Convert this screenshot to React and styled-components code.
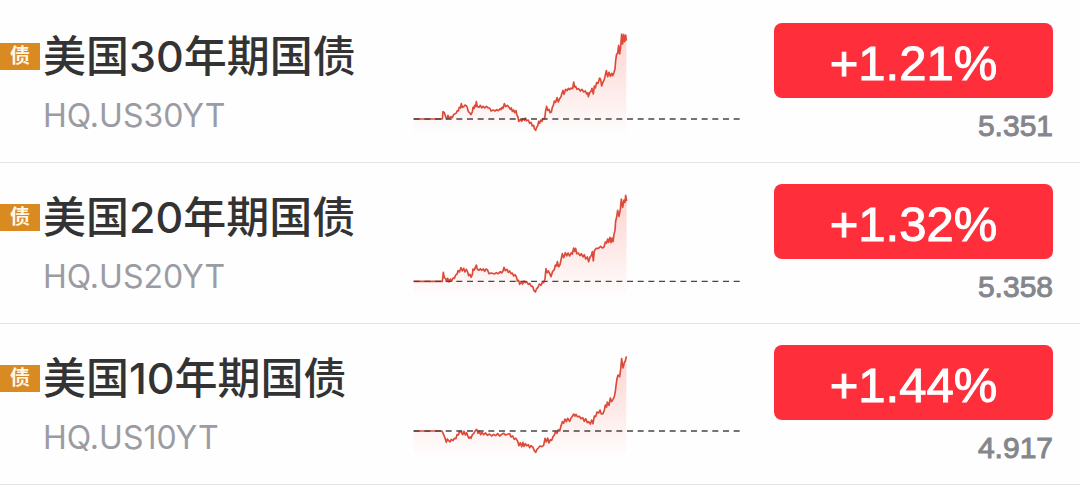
import styled, { createGlobalStyle } from "styled-components";

const bonds = [
  {
    id: "us30",
    name: "美国30年期国债",
    code: "HQ.US30YT",
    change: "+1.21%",
    price: "5.351",
    shift: 0,
    base: 297,
    floor: 338,
    points:
      "26,297 112,297 114,275 118,278 122,291 126,296 129,286 133,295 138,290 142,293 146,284 150,281 154,279 157,272 160,273 163,262 166,264 169,251 172,262 176,260 180,255 184,257 187,263 190,275 194,278 198,284 202,276 204,262 207,266 209,256 212,260 214,245 217,260 222,262 226,256 230,264 234,259 239,264 244,259 250,264 254,264 258,273 264,270 270,273 275,269 280,272 285,266 288,269 291,262 294,265 298,251 302,260 307,256 312,262 316,268 319,264 322,274 326,270 329,278 333,272 336,286 339,291 341,304 346,299 350,304 354,296 358,301 361,294 364,302 370,300 374,310 378,307 382,318 386,316 388,326 392,331 395,322 398,318 401,304 404,310 407,300 411,304 414,296 419,296 422,271 425,259 428,271 432,268 435,278 439,276 442,262 445,256 448,243 452,247 456,233 460,246 464,236 468,230 471,219 474,211 477,223 482,208 486,212 490,205 494,209 498,204 503,206 506,186 509,201 512,199 516,208 521,206 526,213 531,208 536,216 541,213 545,222 548,218 550,230 554,218 558,214 561,205 565,222 568,198 571,204 575,188 579,190 584,174 587,179 590,198 594,186 597,181 600,169 604,152 608,170 612,157 616,169 620,160 623,167 627,157 630,147 632,121 635,102 638,100 641,76 644,102 647,80 650,42 653,72 656,44 659,65 662,45 664,62",
  },
  {
    id: "us20",
    name: "美国20年期国债",
    code: "HQ.US20YT",
    change: "+1.32%",
    price: "5.358",
    shift: 12,
    base: 289,
    floor: 328,
    points:
      "26,289 112,289 115,262 118,278 122,281 125,289 128,280 132,291 136,282 140,288 144,279 148,280 152,270 156,268 159,257 163,261 168,248 172,258 176,250 180,261 184,253 188,261 191,272 195,268 198,277 202,269 204,252 208,255 211,247 214,240 217,253 222,256 226,251 230,256 235,252 239,259 243,252 247,254 252,266 260,264 268,267 274,263 280,266 286,260 290,264 294,258 297,247 301,257 306,253 310,262 314,258 318,266 322,264 326,273 330,269 334,275 337,288 341,286 344,298 349,292 353,297 357,288 361,293 365,290 370,298 374,295 379,304 383,304 387,317 391,321 395,311 399,307 403,297 408,301 412,292 416,293 420,281 423,251 426,263 430,258 434,265 438,275 443,259 448,254 451,240 455,243 457,230 461,245 465,239 468,225 472,206 476,218 481,203 485,213 489,204 494,213 499,203 502,207 506,189 509,199 512,190 515,206 520,204 525,212 529,206 534,216 538,209 542,222 547,216 551,230 555,216 559,212 562,200 565,228 568,198 573,190 580,190 587,184 592,189 597,186 601,171 605,174 608,162 611,172 615,157 618,173 621,159 624,170 627,148 630,136 632,108 635,96 638,76 642,94 646,73 649,42 653,67 657,45 660,52 662,31 665,48",
  },
  {
    id: "us10",
    name: "美国10年期国债",
    code: "HQ.US10YT",
    change: "+1.44%",
    price: "4.917",
    shift: 9,
    base: 258,
    floor: 326,
    points:
      "26,258 111,258 116,269 120,279 124,292 127,282 131,287 135,291 139,283 144,287 148,280 153,281 156,269 160,270 164,259 169,262 173,269 177,259 181,270 185,263 188,272 192,280 195,276 198,280 202,269 206,266 210,258 215,253 219,265 223,259 227,269 231,262 236,269 242,264 247,271 254,267 260,273 266,268 272,272 278,266 284,273 290,268 296,265 302,270 308,268 314,266 318,276 323,273 328,283 333,280 338,289 342,302 346,293 350,305 354,292 357,304 361,296 365,302 370,299 374,308 378,302 384,307 388,317 392,322 396,313 400,309 405,303 411,305 416,301 420,280 424,291 428,279 432,294 436,284 440,286 444,275 448,270 451,261 456,265 460,254 464,258 468,243 472,230 476,235 480,222 484,230 488,220 494,229 498,219 502,214 506,207 510,213 513,208 517,215 523,214 528,221 533,218 538,229 542,221 547,233 551,230 556,237 560,225 564,236 568,213 572,215 576,201 581,204 585,195 589,207 594,206 598,195 601,180 605,186 607,171 612,181 616,159 620,170 624,163 628,155 631,139 633,122 636,101 639,90 644,95 647,72 650,41 654,69 658,53 661,48 664,34",
  },
];

function TrendChart({ bond }) {
  const { id, name, shift, base, floor, points } = bond;
  return (
    <Chart viewBox="24 9 1083 351" role="img" aria-label={`${name}走势`}>
      <defs>
        <linearGradient id={`fade-${id}`} x1="0" y1="40" x2="0" y2={floor} gradientUnits="userSpaceOnUse">
          <stop offset="0" stopColor="#f8402e" stopOpacity="0.22" />
          <stop offset="1" stopColor="#f8402e" stopOpacity="0.01" />
        </linearGradient>
      </defs>
      <g transform={`translate(0 ${shift})`}>
        <polygon points={`26,${floor} ${points} 664,${floor}`} fill={`url(#fade-${id})`} />
        <polyline points={points} fill="none" stroke="#dc4a3a" strokeWidth="5" strokeLinejoin="round" />
        <line x1="26" y1={base} x2="1011" y2={base} stroke="#4a4444" strokeWidth="4" strokeDasharray="18 14" />
      </g>
    </Chart>
  );
}

function BondRow({ bond }) {
  return (
    <Row>
      <Info>
        <Tag>债</Tag>
        <Name>{bond.name}</Name>
        <Code>{bond.code}</Code>
      </Info>
      <TrendChart bond={bond} />
      <Quote>
        <Change>{bond.change}</Change>
        <Price>{bond.price}</Price>
      </Quote>
    </Row>
  );
}

function App() {
  return (
    <>
      <GlobalStyle />
      <BondList>
        {bonds.map((bond) => (
          <BondRow key={bond.id} bond={bond} />
        ))}
      </BondList>
    </>
  );
}

export default App;

const GlobalStyle = createGlobalStyle`
  * {
    box-sizing: border-box;
  }

  body {
    margin: 0;
    background: #fefefe;
    font-family: Inter, "Noto Sans CJK SC", sans-serif;
  }
`;

const BondList = styled.ul`
  list-style: none;
  margin: 0;
  padding: 2px 0 0;
`;

const Row = styled.li`
  display: grid;
  grid-template-columns: minmax(0, 413fr) minmax(0, 361fr) minmax(0, 279fr);
  align-items: start;
  padding: 21px 27px 19px 0;
  border-bottom: 1px solid #e4e4e4;
`;

const Info = styled.div`
  display: grid;
  grid-template-columns: 40px 1fr;
  column-gap: 3px;
  row-gap: 14px;
  align-items: center;
  padding-top: 7px;
`;

const Tag = styled.span`
  background: #d98b22;
  color: #fff8ea;
  font-size: 20px;
  font-weight: 700;
  line-height: 27px;
  text-align: center;
`;

const Name = styled.span`
  color: #333;
  font-size: 43px;
  font-weight: 500;
  line-height: 52px;
  white-space: nowrap;
`;

const Code = styled.span`
  grid-column: 2;
  color: #9b9ca3;
  font-size: 32px;
  line-height: 40px;
`;

const Chart = styled.svg`
  display: block;
  width: 100%;
`;

const Quote = styled.div`
  font-family: "Liberation Sans", Arial, sans-serif;
`;

const Change = styled.div`
  padding-top: 5px;
  border-radius: 8px;
  background: #fe2f3b;
  color: #fff;
  font-size: 49px;
  line-height: 70px;
  text-align: center;
  -webkit-text-stroke: 1px #fff;
`;

const Price = styled.div`
  margin-top: 11px;
  color: #85868c;
  font-size: 30px;
  line-height: 34px;
  text-align: right;
  -webkit-text-stroke: 1px #85868c;
`;
